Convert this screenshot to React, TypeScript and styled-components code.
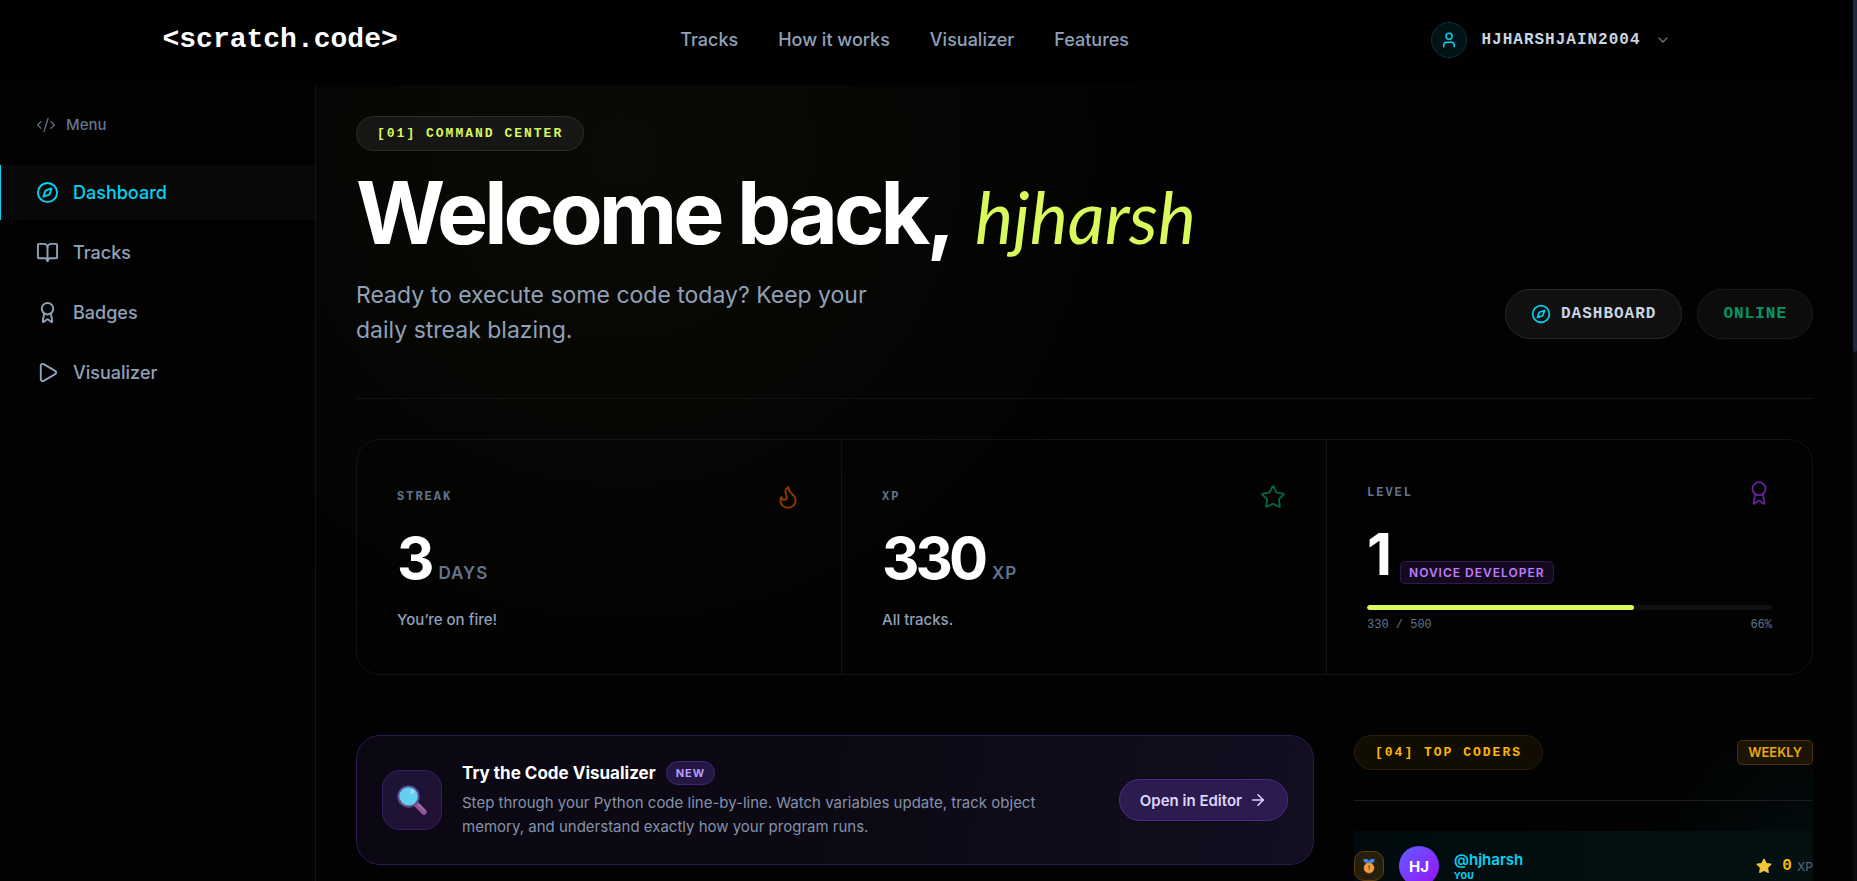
import React from "react";
import styled, { createGlobalStyle } from "styled-components";
import {
  ArrowRight,
  Award,
  BookOpen,
  ChevronDown,
  CodeXml,
  Compass,
  Flame,
  Play,
  Star,
  User,
} from "lucide-react";

const sans = `Inter, "Liberation Sans", sans-serif`;
const mono = `"Liberation Mono", "DejaVu Sans Mono", monospace`;
const lime = "#d9f95d";
const cyan = "#00d3f2";
const slate = "#90a1b9";
const dim = "#62748e";

const GlobalStyle = createGlobalStyle`
  *, *::before, *::after { box-sizing: border-box; }
  body { margin: 0; background: #020202; color: #fff; font-family: ${sans}; }
  h1, h2, h3, p, ul, ol { margin: 0; padding: 0; }
  ul, ol { list-style: none; }
  a { color: inherit; text-decoration: none; }
  button { font: inherit; color: inherit; background: none; border: 0; padding: 0; cursor: pointer; }
  svg { display: block; flex-shrink: 0; }
`;

const Shell = styled.div`
  height: 100vh;
  overflow: hidden;
  display: grid;
  grid-template-columns: minmax(0, 1fr) 4px;
`;

const Page = styled.div`
  min-height: 0;
  display: flex;
  flex-direction: column;
`;

const ScrollTrack = styled.div`
  background: #0a0c12;
`;

const ScrollThumb = styled.div`
  height: 40%;
  background: #1d283a;
  border-radius: 0 0 2px 2px;
`;

const TopBar = styled.header`
  flex-shrink: 0;
  background: #010101;
  padding: 22px 0 27px;
`;

const TopBarInner = styled.div`
  max-width: 1536px;
  margin: 0 auto;
  padding: 0 24px;
  display: flex;
  align-items: center;
  justify-content: space-between;
`;

const Logo = styled.a`
  margin: 0 -20px;
  font: 700 28px/32px ${mono};
`;

const TopNav = styled.nav`
  display: flex;
  gap: 40px;
  font-size: 18px;
  line-height: 24px;
  font-weight: 500;
  color: ${slate};
`;

const UserButton = styled.button`
  display: flex;
  align-items: center;
  gap: 14px;
  font: 700 16px/24px ${mono};
  letter-spacing: 1px;
  color: #cad5e2;
`;

const UserIcon = styled.span`
  width: 36px;
  height: 36px;
  display: grid;
  place-items: center;
  border: 1px solid #07343c;
  border-radius: 50%;
  background: #021217;
  color: ${cyan};
`;

const Body = styled.div`
  flex: 1;
  min-height: 0;
  display: flex;
`;

const Sidebar = styled.aside`
  width: 316px;
  flex-shrink: 0;
  border-right: 1px solid #0e1522;
  background: #020203;
`;

const MenuTitle = styled.h2`
  display: flex;
  align-items: center;
  gap: 10px;
  padding: 28px 36px;
  font-size: 15px;
  line-height: 24px;
  font-weight: 500;
  color: ${dim};
`;

const SideList = styled.ul`
  display: grid;
  gap: 5px;
`;

const SideLink = styled.a<{ $active?: boolean }>`
  height: 55px;
  display: flex;
  align-items: center;
  gap: 14px;
  padding-left: 35px;
  border-left: 1px solid ${(p) => (p.$active ? cyan : "transparent")};
  background: ${(p) => (p.$active ? "#080808" : "transparent")};
  color: ${(p) => (p.$active ? cyan : slate)};
  font-size: 18px;
  font-weight: 500;
`;

const Main = styled.main`
  flex: 1;
  min-width: 0;
  overflow: hidden;
  padding: 31px 40px 0;
  background:
    radial-gradient(circle at 20% 8%, rgba(217, 249, 93, 0.035), transparent 560px),
    #020202;
`;

const Hero = styled.section`
  display: flex;
  align-items: flex-end;
  justify-content: space-between;
  padding-bottom: 50px;
  border-bottom: 1px solid #121212;
`;

const HeroText = styled.div`
  display: flex;
  flex-direction: column;
  align-items: flex-start;
`;

const Tag = styled.span<{ $tone: "lime" | "amber" }>`
  height: 35px;
  display: inline-flex;
  align-items: center;
  padding: 0 20px;
  border: 1px solid ${(p) => (p.$tone === "lime" ? "#2b2b28" : "#2b1d08")};
  border-radius: 18px;
  background: ${(p) => (p.$tone === "lime" ? "#161614" : "#120d03")};
  color: ${(p) => (p.$tone === "lime" ? lime : "#fdb700")};
  font: 700 13px/16px ${mono};
  letter-spacing: 2px;
`;

const Title = styled.h1`
  margin: 18px 0 21px;
  display: flex;
  align-items: baseline;
  gap: 24px;
  font-size: 86px;
  line-height: 88px;
  font-weight: 700;
  letter-spacing: -4px;
`;

const Handle = styled.em`
  font: italic 400 72px/80px Lato, sans-serif;
  letter-spacing: 0;
  color: ${lime};
`;

const Lead = styled.p`
  max-width: 560px;
  font-size: 23px;
  line-height: 35px;
  color: ${slate};
`;

const HeroActions = styled.div`
  display: flex;
  gap: 15px;
  padding-bottom: 9px;
`;

const PillButton = styled.button<{ $online?: boolean }>`
  height: 50px;
  display: flex;
  align-items: center;
  gap: 10px;
  padding: 0 25px;
  border: 1px solid ${(p) => (p.$online ? "#1b1b1b" : "#272727")};
  border-radius: 25px;
  background: ${(p) => (p.$online ? "#0c0c0c" : "#101010")};
  color: ${(p) => (p.$online ? "#009966" : "#cad5e2")};
  font: 700 16px/24px ${mono};
  letter-spacing: 1px;
`;

const Stats = styled.section`
  margin: 40px 0 60px;
  display: grid;
  grid-template-columns: repeat(3, 1fr);
  border: 1px solid #131313;
  border-radius: 24px;
`;

const Stat = styled.article`
  display: flex;
  flex-direction: column;
  justify-content: center;
  padding: 40px;
  border-right: 1px solid #131313;
  &:last-child {
    border-right: 0;
  }
`;

const StatHead = styled.header<{ $color: string }>`
  display: flex;
  align-items: center;
  justify-content: space-between;
  svg {
    color: ${(p) => p.$color};
  }
`;

const StatLabel = styled.h2`
  font: 700 12px/16px ${mono};
  letter-spacing: 2px;
  color: ${dim};
`;

const StatValue = styled.div<{ $align: "baseline" | "flex-end" }>`
  display: flex;
  align-items: ${(p) => p.$align};
  gap: ${(p) => (p.$align === "baseline" ? 8 : 12)}px;
  margin: 18px 0 21px;
  height: 60px;
`;

const StatNumber = styled.strong`
  font-size: 58px;
  line-height: 60px;
  font-weight: 700;
  letter-spacing: -4px;
`;

const StatUnit = styled.span`
  font-size: 17px;
  font-weight: 600;
  letter-spacing: 1px;
  color: ${dim};
`;

const StatHint = styled.p`
  font-size: 15px;
  line-height: 22px;
  font-weight: 500;
  color: ${slate};
`;

const Rank = styled.span`
  padding: 0 8px;
  border: 1px solid #35134f;
  border-radius: 5px;
  background: #140a1f;
  color: #c27aff;
  font-size: 12px;
  line-height: 21px;
  font-weight: 600;
  letter-spacing: 1px;
`;

const Bar = styled.div`
  height: 5px;
  border-radius: 3px;
  background: #101010;
  overflow: hidden;
`;

const BarFill = styled.div`
  height: 100%;
  border-radius: 3px;
  background: ${lime};
`;

const BarLegend = styled.div`
  display: flex;
  justify-content: space-between;
  padding-top: 6px;
  font: 400 12px/18px ${mono};
  color: ${dim};
`;

const Lower = styled.div`
  display: grid;
  grid-template-columns: repeat(12, minmax(0, 1fr));
  column-gap: 40px;
  align-items: start;
`;

const Promo = styled.section`
  grid-column: span 8;
  display: flex;
  align-items: center;
  gap: 20px;
  padding: 25px;
  border: 1px solid #2a1a4d;
  border-radius: 24px;
  background: linear-gradient(100deg, #0c0813 0%, #0c0914 50%, #130e20 100%);
`;

const PromoIcon = styled.span`
  width: 60px;
  height: 60px;
  flex-shrink: 0;
  display: grid;
  place-items: center;
  border: 1px solid #371d66;
  border-radius: 18px;
  background: linear-gradient(135deg, #1c1436, #211033);
`;

const PromoText = styled.div`
  flex: 1;
`;

const PromoHead = styled.div`
  display: flex;
  align-items: center;
  gap: 10px;
  margin-bottom: 6px;
`;

const PromoTitle = styled.h3`
  font-size: 17px;
  line-height: 24px;
  font-weight: 700;
`;

const NewTag = styled.span`
  padding: 0 9px;
  border: 1px solid #43267c;
  border-radius: 12px;
  background: #251743;
  color: #b89cf8;
  font-size: 11px;
  line-height: 22px;
  font-weight: 700;
  letter-spacing: 1px;
`;

const PromoCopy = styled.p`
  max-width: 600px;
  font-size: 15px;
  line-height: 24px;
  color: #8392aa;
`;

const PromoButton = styled.button`
  height: 42px;
  display: flex;
  align-items: center;
  gap: 7px;
  padding: 0 20px;
  border: 1px solid #4b2b88;
  border-radius: 21px;
  background: #2c1b4e;
  color: #ddd6ff;
  font-size: 15px;
  font-weight: 600;
`;

const Board = styled.section`
  grid-column: span 4;
  background: radial-gradient(circle at 100% 130px, rgba(0, 211, 242, 0.05), transparent 170px);
`;

const BoardHead = styled.header`
  display: flex;
  align-items: center;
  justify-content: space-between;
  padding-bottom: 30px;
  margin-bottom: 30px;
  border-bottom: 1px solid #1b1c1e;
`;

const Period = styled.span`
  padding: 0 10px;
  border: 1px solid #4c3008;
  border-radius: 5px;
  background: #1c1405;
  color: #e7a90c;
  font-size: 13px;
  line-height: 23px;
  font-weight: 600;
`;

const CoderRow = styled.li`
  display: flex;
  align-items: center;
  gap: 15px;
  padding: 15px 0;
  background: linear-gradient(90deg, #010b0e, #031110);
`;

const Medal = styled.span`
  width: 30px;
  height: 30px;
  display: grid;
  place-items: center;
  border: 1px solid #5c3f0c;
  border-radius: 10px;
  background: #271e0b;
`;

const Avatar = styled.span`
  width: 40px;
  height: 40px;
  display: grid;
  place-items: center;
  border-radius: 50%;
  background: linear-gradient(135deg, #615fff, #9810fa);
  font-size: 15px;
  font-weight: 700;
`;

const CoderName = styled.div`
  flex: 1;
  display: grid;
  font-size: 15px;
  line-height: 20px;
  font-weight: 600;
  color: ${cyan};
`;

const You = styled.span`
  font: 700 11px/12px ${mono};
`;

const Score = styled.div`
  display: flex;
  align-items: center;
  gap: 5px;
  font-size: 12px;
  font-weight: 500;
  color: #4e5d75;
`;

const Points = styled.b`
  padding-left: 5px;
  font: 700 16px/20px ${mono};
  color: #fdb700;
`;

function Magnifier() {
  return (
    <svg width="32" height="32" viewBox="0 0 32 32" aria-hidden="true">
      <path d="M20.5 20.5 28 28" stroke="#8f5494" strokeWidth="5.5" strokeLinecap="round" />
      <path d="M22.5 20.5 28.5 26.5" stroke="#a869a4" strokeWidth="2" strokeLinecap="round" />
      <circle cx="12.5" cy="12.5" r="10.2" fill="#62d0ee" stroke="#54559a" strokeWidth="1.8" />
      <path d="M3 15.500A10.200 10.200 0 0 0 16.500 21.900" fill="none" stroke="#6d4580" strokeWidth="1.8" />
      <circle cx="16.300" cy="7.500" r="2.200" fill="#a9d9fa" />
    </svg>
  );
}

function MedalIcon() {
  return (
    <svg width="14" height="16" viewBox="0 0 14 16" aria-hidden="true">
      <path d="M1.500 1h4L7 3l1.500-2h4v2.500L9 6H5L1.500 3.500z" fill="#3f82e0" />
      <circle cx="7" cy="10" r="5" fill="#f0a044" stroke="#d88730" strokeWidth="0.800" />
      <path d="M6 8.500 7.300 7.800V12" fill="none" stroke="#9c5a1c" strokeWidth="1.300" />
    </svg>
  );
}

function GoldStar() {
  return (
    <svg width="16" height="16" viewBox="0 0 16 16" aria-hidden="true">
      <path
        d="M8 1.300 10.100 5.600 14.800 6.300 11.400 9.600 12.200 14.300 8 12.100 3.800 14.300 4.600 9.600 1.200 6.300 5.900 5.600z"
        fill="#f0c63c"
        stroke="#f0c63c"
        strokeWidth="1.400"
        strokeLinejoin="round"
      />
    </svg>
  );
}

const topLinks = ["Tracks", "How it works", "Visualizer", "Features"];

const sideLinks = [
  { label: "Dashboard", Icon: Compass, active: true },
  { label: "Tracks", Icon: BookOpen },
  { label: "Badges", Icon: Award },
  { label: "Visualizer", Icon: Play },
];

const level = { xp: 330, goal: 500 };

export default function App() {
  const percent = Math.round((level.xp / level.goal) * 100);

  return (
    <>
      <GlobalStyle />
      <Shell>
        <Page>
          <TopBar>
            <TopBarInner>
              <Logo href="#">&lt;scratch.code&gt;</Logo>
              <TopNav aria-label="Main">
                {topLinks.map((label) => (
                  <a href="#" key={label}>{label}</a>
                ))}
              </TopNav>
              <UserButton type="button">
                <UserIcon><User size={18} /></UserIcon>
                HJHARSHJAIN2004
                <ChevronDown size={16} color={dim} />
              </UserButton>
            </TopBarInner>
          </TopBar>

          <Body>
            <Sidebar>
              <MenuTitle><CodeXml size={20} strokeWidth={1.5} />Menu</MenuTitle>
              <nav aria-label="Sections">
                <SideList>
                  {sideLinks.map(({ label, Icon, active }) => (
                    <li key={label}>
                      <SideLink href="#" $active={active} aria-current={active ? "page" : undefined}>
                        <Icon size={23} strokeWidth={2} />
                        {label}
                      </SideLink>
                    </li>
                  ))}
                </SideList>
              </nav>
            </Sidebar>

            <Main>
              <Hero>
                <HeroText>
                  <Tag $tone="lime">[01] COMMAND CENTER</Tag>
                  <Title>
                    <span>Welcome back,</span>
                    <Handle>hjharsh</Handle>
                  </Title>
                  <Lead>Ready to execute some code today? Keep your daily streak blazing.</Lead>
                </HeroText>
                <HeroActions>
                  <PillButton type="button">
                    <Compass size={20} color={cyan} />
                    DASHBOARD
                  </PillButton>
                  <PillButton type="button" $online>ONLINE</PillButton>
                </HeroActions>
              </Hero>

              <Stats>
                <Stat>
                  <StatHead $color="#943901">
                    <StatLabel>STREAK</StatLabel>
                    <Flame size={26} strokeWidth={1.7} />
                  </StatHead>
                  <StatValue $align="baseline">
                    <StatNumber>3</StatNumber>
                    <StatUnit>DAYS</StatUnit>
                  </StatValue>
                  <StatHint>You’re on fire!</StatHint>
                </Stat>
                <Stat>
                  <StatHead $color="#006843">
                    <StatLabel>XP</StatLabel>
                    <Star size={26} strokeWidth={1.7} />
                  </StatHead>
                  <StatValue $align="baseline">
                    <StatNumber>330</StatNumber>
                    <StatUnit>XP</StatUnit>
                  </StatValue>
                  <StatHint>All tracks.</StatHint>
                </Stat>
                <Stat>
                  <StatHead $color="#662098">
                    <StatLabel>LEVEL</StatLabel>
                    <Award size={26} strokeWidth={1.7} />
                  </StatHead>
                  <StatValue $align="flex-end">
                    <StatNumber>1</StatNumber>
                    <Rank>NOVICE DEVELOPER</Rank>
                  </StatValue>
                  <Bar role="progressbar" aria-label="Level progress" aria-valuenow={percent}>
                    <BarFill style={{ width: `${percent}%` }} />
                  </Bar>
                  <BarLegend>
                    <span>{level.xp} / {level.goal}</span>
                    <span>{percent}%</span>
                  </BarLegend>
                </Stat>
              </Stats>

              <Lower>
                <Promo>
                  <PromoIcon><Magnifier /></PromoIcon>
                  <PromoText>
                    <PromoHead>
                      <PromoTitle>Try the Code Visualizer</PromoTitle>
                      <NewTag>NEW</NewTag>
                    </PromoHead>
                    <PromoCopy>
                      Step through your Python code line-by-line. Watch variables update, track
                      object memory, and understand exactly how your program runs.
                    </PromoCopy>
                  </PromoText>
                  <PromoButton type="button">
                    Open in Editor
                    <ArrowRight size={18} />
                  </PromoButton>
                </Promo>

                <Board>
                  <BoardHead>
                    <Tag $tone="amber">[04] TOP CODERS</Tag>
                    <Period>WEEKLY</Period>
                  </BoardHead>
                  <ol>
                    <CoderRow>
                      <Medal><MedalIcon /></Medal>
                      <Avatar>HJ</Avatar>
                      <CoderName>
                        @hjharsh
                        <You>YOU</You>
                      </CoderName>
                      <Score>
                        <GoldStar />
                        <Points>0</Points>
                        XP
                      </Score>
                    </CoderRow>
                  </ol>
                </Board>
              </Lower>
            </Main>
          </Body>
        </Page>
        <ScrollTrack aria-hidden="true">
          <ScrollThumb />
        </ScrollTrack>
      </Shell>
    </>
  );
}
